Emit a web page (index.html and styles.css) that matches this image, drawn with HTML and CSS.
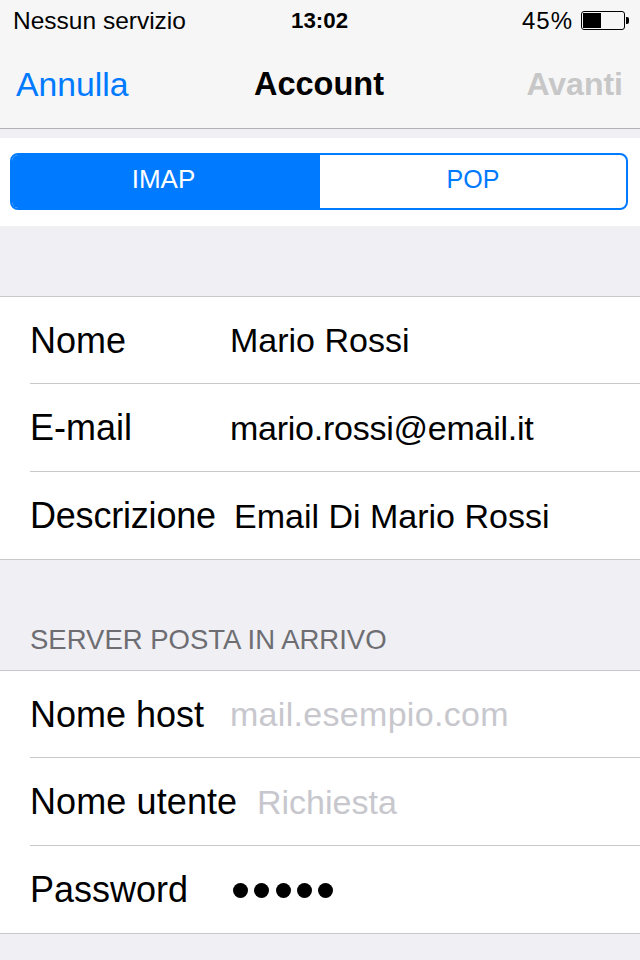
FILE: index.html
```html
<!DOCTYPE html>
<html lang="it">
<head>
<meta charset="utf-8">
<title>Account</title>
<link rel="stylesheet" href="styles.css">
</head>
<body>
<div class="screen">
  <header class="top">
    <div class="status">
      <span class="carrier">Nessun servizio</span>
      <span class="time">13:02</span>
      <span class="power">
        <span class="pct">45%</span>
        <span class="battery"><span class="level"></span></span>
        <span class="nub"></span>
      </span>
    </div>
    <nav class="nav">
      <span class="cancel">Annulla</span>
      <span class="title">Account</span>
      <span class="next">Avanti</span>
    </nav>
  </header>
  <section class="segment-band">
    <div class="segment">
      <span class="seg seg-on">IMAP</span>
      <span class="seg">POP</span>
    </div>
  </section>
  <section class="group first">
    <div class="row"><span class="label w-nome">Nome</span><span class="value">Mario Rossi</span></div>
    <div class="row"><span class="label w-nome">E-mail</span><span class="value tight">mario.rossi@email.it</span></div>
    <div class="row"><span class="label w-desc">Descrizione</span><span class="value">Email Di Mario Rossi</span></div>
  </section>
  <h2 class="section-title">SERVER POSTA IN ARRIVO</h2>
  <section class="group">
    <div class="row"><span class="label w-nome">Nome host</span><span class="value hint wide">mail.esempio.com</span></div>
    <div class="row"><span class="label w-user">Nome utente</span><span class="value hint">Richiesta</span></div>
    <div class="row"><span class="label w-nome">Password</span><span class="dots"><i></i><i></i><i></i><i></i><i></i></span></div>
  </section>
</div>
</body>
</html>
```
FILE: styles.css
```css
* { box-sizing: border-box; }
html, body { margin: 0; padding: 0; }
body { width: 640px; height: 960px; overflow: hidden; background: #efeff4; font-family: "Liberation Sans", Arial, sans-serif; color: #000; }
.screen { width: 640px; height: 960px; overflow: hidden; }
.top { height: 129px; background: #f6f6f7; border-bottom: 1px solid #b2b2b2; }
.status { height: 40px; position: relative; display: flex; align-items: center; justify-content: space-between; padding: 2px 11px 0 13px; font-size: 24.5px; }
.time { position: absolute; left: 291px; top: 8px; font-size: 22.3px; font-weight: 700; line-height: 26px; }
.power { display: flex; align-items: center; }
.pct { font-size: 24px; letter-spacing: 1px; margin-right: 8px; }
.battery { width: 44px; height: 19px; margin-top: -1px; border: 1px solid #000; border-radius: 3px; padding: 1px; display: block; }
.level { display: block; width: 18px; height: 15px; background: #000; }
.nub { width: 3px; height: 7px; margin-top: -1px; background: #000; border-radius: 0 2px 2px 0; margin-left: 1px; }
.nav { height: 88px; display: flex; align-items: center; justify-content: space-between; padding: 0 17px 0 16px; font-size: 33.7px; position: relative; }
.cancel { color: #007aff; }
.title { font-weight: 700; font-size: 32.5px; position: absolute; left: 254px; }
.next { color: #c7c7c7; font-weight: 700; font-size: 32px; }
.segment-band { margin-top: 9px; height: 88px; background: #fff; padding: 15px 12px 16px 10px; }
.segment { display: flex; height: 57px; width: 618px; border: 2px solid #007aff; border-radius: 8px; overflow: hidden; }
.seg { flex: 1; display: flex; align-items: center; justify-content: center; font-size: 25px; color: #007aff; padding-bottom: 5px; }
.seg-on { background: #007aff; color: #fff; flex: none; width: 308px; font-size: 26px; padding-right: 5px; }
.group { background: #fff; border-top: 1px solid #c8c7cc; border-bottom: 1px solid #c8c7cc; }
.first { margin-top: 70px; }
.row { height: 88px; margin-left: 30px; display: flex; align-items: center; font-size: 34px; border-bottom: 1px solid #c8c7cc; white-space: nowrap; padding-top: 1px; }
.row:first-child { height: 87px; }
.row:last-child { border-bottom: 0; height: 87px; }
.label { display: block; font-size: 36px; }
.w-nome { width: 200px; }
.w-desc { width: 204px; letter-spacing: -0.2px; }
.w-user { width: 227px; letter-spacing: 0.1px; }
.tight { letter-spacing: -0.25px; }
.wide { letter-spacing: 0.3px; }
.hint { color: #c7c7cd; }
.dots { display: flex; gap: 6.3px; margin-left: 3px; }
.dots i { display: block; width: 15px; height: 15px; border-radius: 50%; background: #000; }
.section-title { margin: 0; height: 110px; padding: 65px 0 0 30px; font-size: 27.5px; line-height: 30px; font-weight: 400; color: #6d6d72; }
```
